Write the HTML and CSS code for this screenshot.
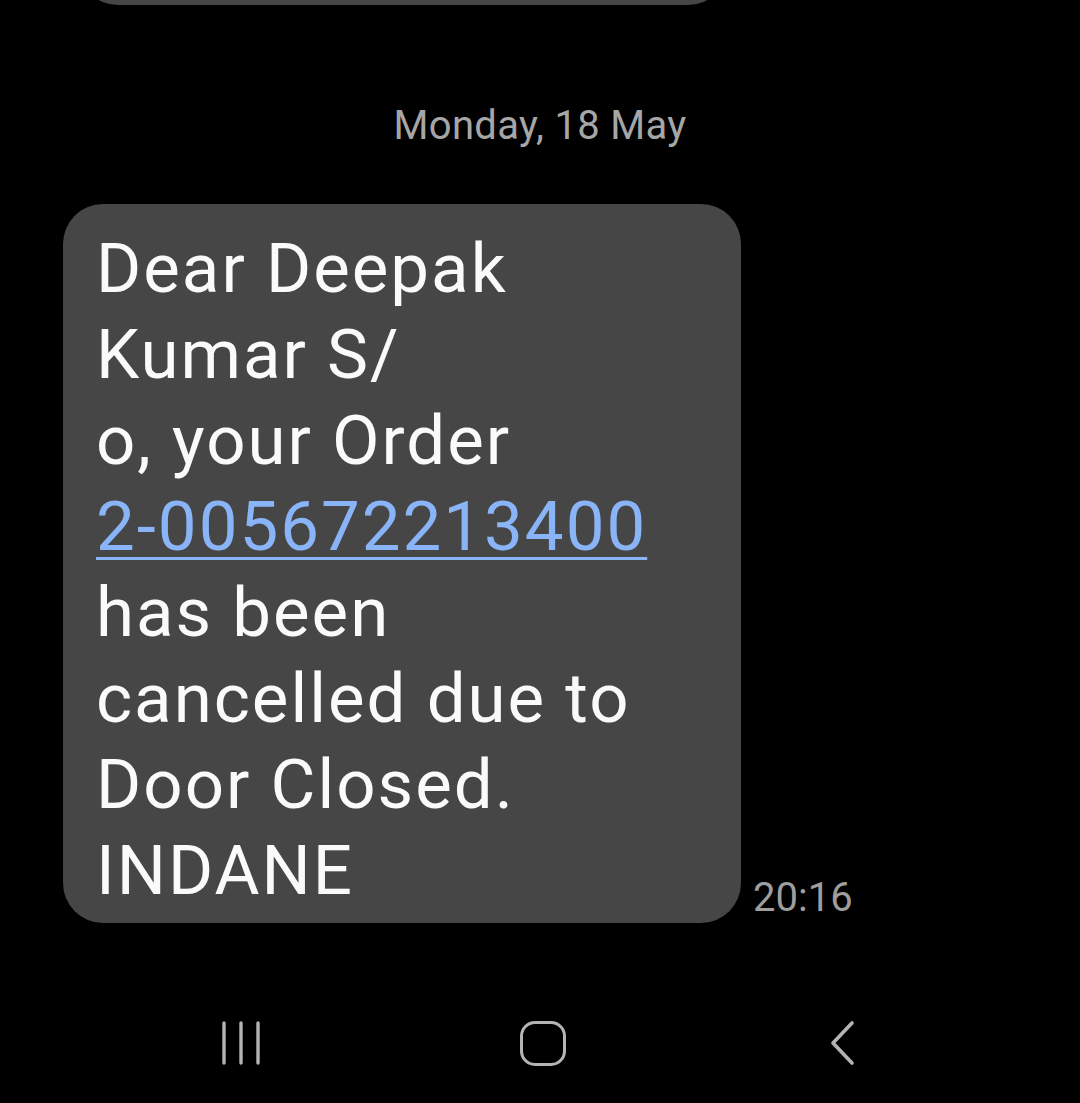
FILE: index.html
```html
<!DOCTYPE html>
<html>
<head>
<meta charset="utf-8">
<link rel="stylesheet" href="styles.css">
</head>
<body>
<div class="screen">
  <div class="prev-wrap"><div class="prev-bubble"></div></div>
  <div class="date">Monday, 18 May</div>
  <div class="msg-row">
    <div class="bubble">Dear Deepak<br>Kumar S/<br>o, your Order<br><a class="link" href="#">2-005672213400</a><br>has been<br>cancelled due to<br>Door Closed.<br>INDANE</div>
    <div class="time">20:16</div>
  </div>
  <div class="spacer"></div>
  <nav class="navbar">
    <svg class="nav-recents" width="44" height="46" viewBox="0 0 44 46"><g stroke="#b4b4b4" stroke-width="3.4" stroke-linecap="round"><line x1="4" y1="3" x2="4" y2="43"/><line x1="21" y1="3" x2="21" y2="43"/><line x1="38" y1="3" x2="38" y2="43"/></g></svg>
    <div class="home"></div>
    <svg class="nav-back" width="30" height="46" viewBox="0 0 30 46"><polyline points="25,3 6,23 25,43" fill="none" stroke="#b4b4b4" stroke-width="3.6" stroke-linecap="round" stroke-linejoin="round"/></svg>
  </nav>
</div>
</body>
</html>
```
FILE: styles.css
```css
html, body {
  margin: 0;
  padding: 0;
  background: #000;
}
.screen {
  width: 1080px;
  height: 1103px;
  display: flex;
  flex-direction: column;
  font-family: Roboto, "Noto Sans", sans-serif;
  overflow: hidden;
}
.prev-wrap {
  height: 5px;
  overflow: hidden;
  display: flex;
  align-items: flex-end;
  padding-left: 78px;
}
.prev-bubble {
  flex: none;
  width: 650px;
  height: 80px;
  background: #464646;
  border-radius: 40px;
}
.date {
  margin-top: 96px;
  text-align: center;
  color: #a6a6a6;
  font-size: 40px;
  letter-spacing: 0.3px;
  line-height: 50px;
}
.msg-row {
  margin-top: 53px;
  display: flex;
  align-items: flex-end;
  padding-left: 63px;
}
.bubble {
  width: 645px;
  background: #464646;
  border-radius: 40px;
  padding: 22px 0 9px 33px;
  color: #fafafa;
  font-size: 69px;
  letter-spacing: 2px;
  line-height: 86px;
}
.link {
  color: #8ab4f8;
  text-decoration: underline;
  text-decoration-thickness: 3px;
  text-underline-offset: 7px;
}
.time {
  margin-left: 12px;
  margin-bottom: 0;
  color: #9e9e9e;
  font-size: 40px;
  line-height: 50px;
}
.spacer {
  flex: 1;
}
.navbar {
  height: 120px;
  display: flex;
  align-items: center;
  padding-left: 220px;
}
.nav-recents {
  flex: none;
}
.home {
  flex: none;
  margin-left: 256px;
  width: 40px;
  height: 39px;
  border: 3.5px solid #b4b4b4;
  border-radius: 15px;
}
.nav-back {
  flex: none;
  margin-left: 261px;
}
```
